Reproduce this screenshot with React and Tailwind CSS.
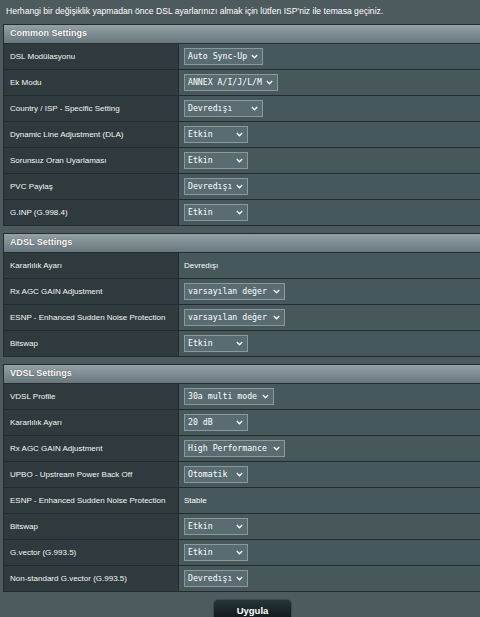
import React from "react";

const Chevron = () => (
  <svg width="7" height="5" viewBox="0 0 7 5" className="shrink-0 ml-[2px]">
    <polyline points="0.8,1 3.5,3.8 6.2,1" fill="none" stroke="#ffffff" strokeWidth="1.3" />
  </svg>
);

const Select = ({ value, w }) => (
  <div
    className={`flex items-center justify-between h-[17px] ${w} border border-[#8c989c] bg-[#596c72] pl-[3px] pr-[4px] text-white text-[8.2px] font-['DejaVu_Sans_Mono',monospace] whitespace-nowrap`}
  >
    <span>{value}</span>
    <Chevron />
  </div>
);

const Row = ({ label, children }) => (
  <div className="flex h-[26px] border-b border-[#242c2f]">
    <div className="flex items-center w-[175px] shrink-0 pl-[6px] bg-[#2f3a3e] border-r border-[#242c2f] text-[#f4f6f6] text-[8px]">
      {label}
    </div>
    <div className="flex items-center flex-1 pl-[5px] bg-[#47585d] text-white text-[8px]">
      {children}
    </div>
  </div>
);

const Section = ({ title, rows }) => (
  <div className="ml-[3px] w-[640px] border-t border-l border-[#242c2f]">
    <div className="flex items-center h-[19px] pl-[6px] bg-gradient-to-b from-[#94a2a7] to-[#68777d] border-b border-[#242c2f] text-white text-[9px] font-bold [text-shadow:0_0_1px_#333]">
      {title}
    </div>
    {rows.map((r, i) => (
      <Row key={i} label={r[0]}>
        {r[2] ? <Select value={r[1]} w={r[2]} /> : <span>{r[1]}</span>}
      </Row>
    ))}
  </div>
);

const common = [
  ["DSL Modülasyonu", "Auto Sync-Up", "w-[79px]"],
  ["Ek Modu", "ANNEX A/I/J/L/M", "w-[94px]"],
  ["Country / ISP - Specific Setting", "Devredışı", "w-[79px]"],
  ["Dynamic Line Adjustment (DLA)", "Etkin", "w-[64px]"],
  ["Sorunsuz Oran Uyarlaması", "Etkin", "w-[64px]"],
  ["PVC Paylaş", "Devredışı", "w-[64px]"],
  ["G.INP (G.998.4)", "Etkin", "w-[64px]"],
];

const adsl = [
  ["Kararlılık Ayarı", "Devredışı"],
  ["Rx AGC GAIN Adjustment", "varsayılan değer", "w-[101px]"],
  ["ESNP - Enhanced Sudden Noise Protection", "varsayılan değer", "w-[101px]"],
  ["Bitswap", "Etkin", "w-[64px]"],
];

const vdsl = [
  ["VDSL Profile", "30a multi mode", "w-[90px]"],
  ["Kararlılık Ayarı", "20 dB", "w-[64px]"],
  ["Rx AGC GAIN Adjustment", "High Performance", "w-[101px]"],
  ["UPBO - Upstream Power Back Off", "Otomatik", "w-[64px]"],
  ["ESNP - Enhanced Sudden Noise Protection", "Stable"],
  ["Bitswap", "Etkin", "w-[64px]"],
  ["G.vector (G.993.5)", "Etkin", "w-[64px]"],
  ["Non-standard G.vector (G.993.5)", "Devredışı", "w-[64px]"],
];

export default function App() {
  return (
    <div className="w-[480px] h-[617px] overflow-hidden bg-[#4d5a5e] font-['Liberation_Sans',Arial,sans-serif]">
      <div className="h-[24px] pt-[5px] pl-[6px] text-[8.6px] leading-[12px] text-white whitespace-nowrap">
        Herhangi bir değişiklik yapmadan önce DSL ayarlarınızı almak için lütfen ISP'niz ile temasa geçiniz.
      </div>
      <div className="flex flex-col gap-[7px]">
        <Section title="Common Settings" rows={common} />
        <Section title="ADSL Settings" rows={adsl} />
        <Section title="VDSL Settings" rows={vdsl} />
      </div>
      <div className="pt-[7px] pl-[213px]">
        <button className="flex items-center justify-center w-[79px] h-[24px] rounded-[5px] border border-[#3c4a4f] bg-gradient-to-b from-[#233438] to-[#0f1517] text-white text-[9.5px] font-bold">
          Uygula
        </button>
      </div>
    </div>
  );
}
